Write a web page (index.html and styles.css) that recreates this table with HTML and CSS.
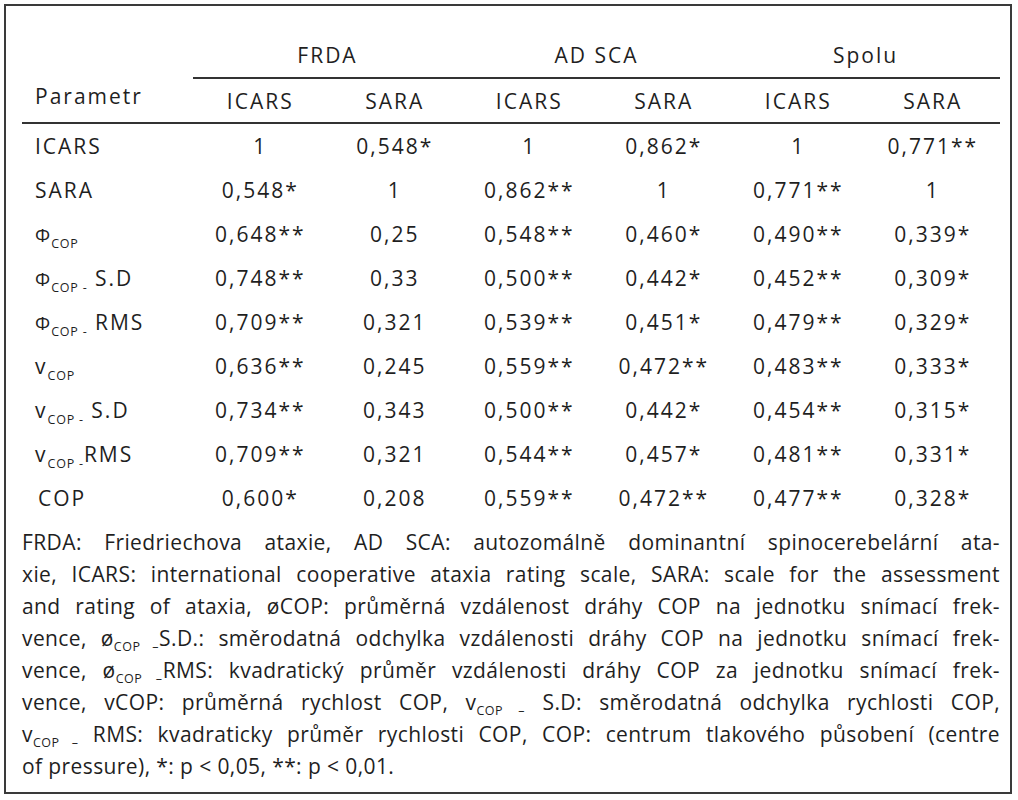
FILE: index.html
```html
<!DOCTYPE html>
<html lang="cs">
<head>
    <meta charset="UTF-8">
    <meta name="viewport" content="width=device-width, initial-scale=1.0">
    <title>Korelace parametrů COP</title>
    <link rel="stylesheet" href="styles.css">
</head>
<body>
    <div class="frame">
        <table class="corr">
            <colgroup>
                <col class="col-param">
                <col><col><col><col><col><col>
            </colgroup>
            <thead>
                <tr class="groups">
                    <th rowspan="2" class="param">Parametr</th>
                    <th colspan="2" class="group">FRDA</th>
                    <th colspan="2" class="group">AD SCA</th>
                    <th colspan="2" class="group">Spolu</th>
                </tr>
                <tr class="scales">
                    <th>ICARS</th>
                    <th>SARA</th>
                    <th>ICARS</th>
                    <th>SARA</th>
                    <th>ICARS</th>
                    <th>SARA</th>
                </tr>
            </thead>
            <tbody>
                <tr>
                    <td class="label">ICARS</td>
                    <td>1</td><td>0,548*</td><td>1</td><td>0,862*</td><td>1</td><td>0,771**</td>
                </tr>
                <tr>
                    <td class="label">SARA</td>
                    <td>0,548*</td><td>1</td><td>0,862**</td><td>1</td><td>0,771**</td><td>1</td>
                </tr>
                <tr>
                    <td class="label"><span class="phi">Φ</span><sub>COP</sub></td>
                    <td>0,648**</td><td>0,25</td><td>0,548**</td><td>0,460*</td><td>0,490**</td><td>0,339*</td>
                </tr>
                <tr>
                    <td class="label"><span class="phi">Φ</span><sub>COP -</sub> S.D</td>
                    <td>0,748**</td><td>0,33</td><td>0,500**</td><td>0,442*</td><td>0,452**</td><td>0,309*</td>
                </tr>
                <tr>
                    <td class="label"><span class="phi">Φ</span><sub>COP -</sub> RMS</td>
                    <td>0,709**</td><td>0,321</td><td>0,539**</td><td>0,451*</td><td>0,479**</td><td>0,329*</td>
                </tr>
                <tr>
                    <td class="label">v<sub>COP</sub></td>
                    <td>0,636**</td><td>0,245</td><td>0,559**</td><td>0,472**</td><td>0,483**</td><td>0,333*</td>
                </tr>
                <tr>
                    <td class="label">v<sub>COP -</sub> S.D</td>
                    <td>0,734**</td><td>0,343</td><td>0,500**</td><td>0,442*</td><td>0,454**</td><td>0,315*</td>
                </tr>
                <tr>
                    <td class="label">v<sub>COP -</sub>RMS</td>
                    <td>0,709**</td><td>0,321</td><td>0,544**</td><td>0,457*</td><td>0,481**</td><td>0,331*</td>
                </tr>
                <tr>
                    <td class="label cop">COP</td>
                    <td>0,600*</td><td>0,208</td><td>0,559**</td><td>0,472**</td><td>0,477**</td><td>0,328*</td>
                </tr>
            </tbody>
        </table>

        <div class="notes">
            <div class="ln">FRDA: Friedriechova ataxie, AD SCA: autozomálně dominantní spinocerebelární ata-</div>
            <div class="ln">xie, ICARS: international cooperative ataxia rating scale, SARA: scale for the assessment</div>
            <div class="ln">and rating of ataxia, øCOP: průměrná vzdálenost dráhy COP na jednotku snímací frek-</div>
            <div class="ln">vence, ø<sub>COP –</sub>S.D.: směrodatná odchylka vzdálenosti dráhy COP na jednotku snímací frek-</div>
            <div class="ln">vence, ø<sub>COP –</sub>RMS: kvadratický průměr vzdálenosti dráhy COP za jednotku snímací frek-</div>
            <div class="ln">vence, vCOP: průměrná rychlost COP, v<sub>COP –</sub> S.D: směrodatná odchylka rychlosti COP,</div>
            <div class="ln">v<sub>COP –</sub> RMS: kvadraticky průměr rychlosti COP, COP: centrum tlakového působení (centre</div>
            <div class="last">of pressure), *: p &lt; 0,05, **: p &lt; 0,01.</div>
        </div>
    </div>
</body>
</html>
```

FILE: styles.css
```css
body {
    margin: 0;
    background: #ffffff;
    font-family: "Open Sans", "Noto Sans", sans-serif;
    color: #1f1f1f;
}
.frame {
    box-sizing: border-box;
    width: 1008px;
    height: 790px;
    margin: 4px;
    border: 2px solid #3a3a3a;
    padding: 0 10px 0 16px;
}
.corr {
    width: 978px;
    table-layout: fixed;
    border-collapse: collapse;
    font-size: 21px;
    letter-spacing: 2px;
}
.col-param {
    width: 171px;
}
.corr th {
    font-weight: normal;
    text-align: center;
    padding: 0;
}
.groups th {
    height: 72px;
    vertical-align: bottom;
    padding-bottom: 8px;
    box-sizing: border-box;
}
.groups .group {
    border-bottom: 2px solid #333;
}
.corr th.param {
    text-align: left;
    vertical-align: bottom;
    padding: 0 0 12px 13px;
    border-bottom: 2px solid #333;
}
.scales th {
    height: 43px;
    border-bottom: 2px solid #333;
}
.corr td {
    height: 44px;
    padding: 0;
    text-align: center;
    vertical-align: middle;
}
.corr td.label {
    text-align: left;
    padding-left: 13px;
}
.corr td.cop {
    padding-left: 16px;
}
.phi {
    font-size: 19px;
    letter-spacing: 0;
    margin-right: 1px;
}
.corr sub {
    font-size: 12.5px;
    letter-spacing: 0.8px;
    vertical-align: -6px;
    line-height: 0;
}
.notes {
    padding-top: 6px;
    font-size: 21px;
    letter-spacing: 0.4px;
    line-height: 32px;
}
.notes .ln {
    white-space: nowrap;
    text-align: justify;
    text-align-last: justify;
}
.notes sub {
    font-size: 12.5px;
    letter-spacing: 0.5px;
    vertical-align: -5px;
    line-height: 0;
}
```
